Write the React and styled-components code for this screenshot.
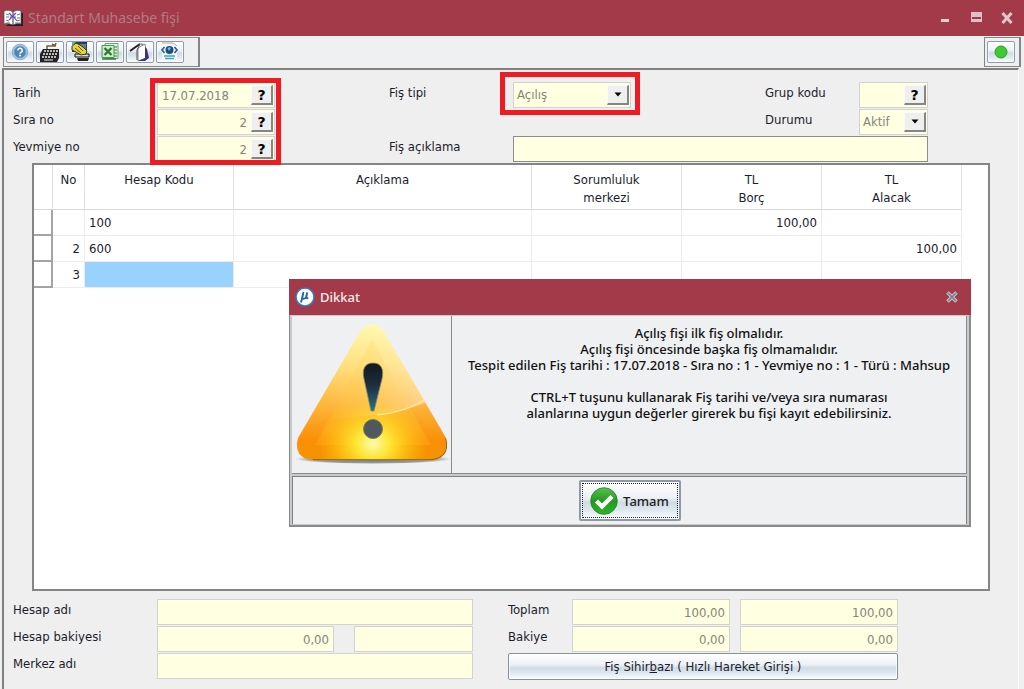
import React from "react";
import styled, { createGlobalStyle, css } from "styled-components";

const ui = `"Noto Sans", "Open Sans", sans-serif`;
const cond = `"DejaVu Sans Condensed", "Noto Sans", sans-serif`;
const wine = "#a33a49";
const cream = "#ffffe1";

const Global = createGlobalStyle`
  *, *::before, *::after { box-sizing: border-box; }
  body { margin: 0; background: #efefef; }
  button, input, select { font: inherit; color: inherit; margin: 0; }
`;

const Window = styled.div`
  position: relative;
  min-height: 100vh;
  display: flex;
  flex-direction: column;
  background: #efefef;
  color: #1c1c2c;
  font: 13px/18px ${cond};
`;

const TitleBar = styled.header`
  height: 36px;
  flex: none;
  display: flex;
  align-items: center;
  gap: 4px;
  padding: 0 8px 0 3px;
  background: ${wine};
`;

const Title = styled.h1`
  flex: 1;
  margin: 0;
  font: 14px/20px ${ui};
  color: #b07c82;
`;

const Controls = styled.div`
  display: flex;
  gap: 12px;
`;

const ControlButton = styled.button`
  width: 19px;
  height: 20px;
  padding: 0;
  border: 0;
  background: none;
  display: grid;
  place-items: center;
`;

const ToolBar = styled.nav`
  flex: none;
  display: flex;
  justify-content: space-between;
  padding: 1px 3px 0;
  background: #eff0f2;
`;

const ToolGroup = styled.div`
  display: flex;
  gap: 2px;
  padding: 3px ${(p) => (p.$wide ? 14 : 4)}px 3px 2px;
  border: 2px solid #858585;
  border-width: 1px 2px 1px 1px;
`;

const glossy = css`
  border: 1px solid #8f9cab;
  border-radius: 2px;
  background: linear-gradient(#ffffff, #edf1f5 42%, #cfdbe5 56%, #dde7ee 75%, #fafcfd);
  box-shadow: inset 0 0 0 1px #ffffffaa;
`;

const ToolButton = styled.button`
  ${glossy}
  width: 28px;
  height: 22px;
  padding: 0;
  display: grid;
  place-items: center;
`;

const Panel = styled.main`
  flex: 1;
  display: flex;
  flex-direction: column;
  margin: 1px 5px 0 2px;
  padding: 12px 0 10px;
  border-left: 2px solid #808080;
  border-top: 2px solid #808080;
  border-right: 1px solid #fafafa;
`;

const FormGrid = styled.form`
  display: grid;
  grid-template-columns: 144fr 232fr 124fr 252fr 94fr 69fr 90fr;
  grid-template-rows: repeat(3, 26px);
  row-gap: 1px;
  padding-left: 9px;
`;

const Label = styled.label`
  grid-column: ${(p) => p.$col};
  grid-row: ${(p) => p.$row};
  line-height: 22px;
`;

const Cell = styled.div`
  position: relative;
  grid-column: ${(p) => p.$col};
  grid-row: ${(p) => p.$row};
  display: grid;
  grid-auto-rows: 26px;
  row-gap: 1px;
  width: ${(p) => p.$w || "100%"};
`;

const RedFrame = styled.div`
  position: absolute;
  inset: ${(p) => p.$inset};
  border: 5px solid #ed1c24;
  pointer-events: none;
  z-index: 1;
`;

const Field = styled.div`
  display: flex;
  align-items: center;
  min-width: 0;
  height: 26px;
  padding-right: ${(p) => (p.$plain ? 0 : 1)}px;
  border: 1px solid ${(p) => (p.$strong ? "#8c8c8c" : "#d2d2d2")};
  background: ${cream};
  color: #85857a;
`;

const TextInput = styled.input`
  flex: 1;
  width: 0;
  min-width: 0;
  height: 24px;
  padding: 0 4px;
  border: 0;
  outline: 0;
  background: transparent;
  text-align: ${(p) => (p.$right ? "right" : "left")};
`;

const Select = styled.select`
  appearance: none;
  flex: 1;
  width: 0;
  min-width: 0;
  height: 24px;
  padding: 0 0 0 3px;
  border: 0;
  outline: 0;
  background: transparent;
`;

const raised = css`
  flex: none;
  width: 22px;
  height: 20px;
  padding: 0;
  display: grid;
  place-items: center;
  background: #efefef;
  border: 1px solid #fafafa;
  border-right: 2px solid #858585;
  border-bottom: 2px solid #858585;
`;

const HelpButton = styled.button`
  ${raised}
  color: #000;
  font: bold 14px/16px "DejaVu Sans", sans-serif;
`;

const Arrow = styled.span`
  ${raised}
  pointer-events: none;
`;

const GridBox = styled.section`
  flex: 1 0 240px;
  margin: 1px 28px 0;
  border: 2px solid #858585;
  background: #fff;
  padding-right: 26px;
`;

const Table = styled.table`
  width: 100%;
  table-layout: fixed;
  border-collapse: separate;
  border-spacing: 0;
`;

const Col = styled.col`
  width: ${(p) => p.$w};
`;

const Th = styled.th`
  height: 45px;
  padding: 6px 0 0;
  vertical-align: top;
  font-weight: normal;
  border-right: 1px solid #e2e2e2;
  border-bottom: 1px solid #d8d8d8;
`;

const Td = styled.td`
  height: 26px;
  padding: 0 4px;
  text-align: ${(p) => (p.$right ? "right" : "left")};
  background: ${(p) => (p.$active ? "#99d1ff" : "#fff")};
  border-right: 1px solid #ececec;
  border-bottom: 1px solid #ececec;
`;

const Selector = styled.td`
  height: 26px;
  padding: 0;
  border-right: 2px solid #a4a4a4;
  border-bottom: 2px solid #a4a4a4;
`;

const Footer = styled.section`
  display: grid;
  grid-template-columns: 144fr 177fr 20fr 119fr 35fr 64fr 158fr 10fr 158fr 120fr;
  grid-auto-rows: 26px;
  row-gap: 1px;
  padding: 8px 0 0 9px;
`;

const FooterCell = styled.div`
  grid-column: ${(p) => p.$col};
  grid-row: ${(p) => p.$row};
`;

const WizardButton = styled.button`
  ${glossy}
  width: 100%;
  height: 27px;
  padding: 0;
  border-color: #86919c;
`;

const Dialog = styled.div`
  position: absolute;
  left: 289px;
  top: 279px;
  width: 682px;
  display: flex;
  flex-direction: column;
  background: #c9cacc;
  border: 1px solid #8a8a8a;
  border-width: 0 2px 2px 1px;
  z-index: 2;
  font: 500 13px/16px ${ui};
  color: #111;
`;

const DialogTitle = styled.header`
  height: 36px;
  margin: 0 -2px 0 -1px;
  padding: 0 10px 0 6px;
  display: flex;
  align-items: center;
  gap: 5px;
  background: ${wine};
`;

const DialogHeading = styled.h2`
  flex: 1;
  margin: 0;
  font: 500 13px/18px ${ui};
  color: #f6eaec;
`;

const DialogBody = styled.div`
  display: grid;
  grid-template-columns: 160px 1fr;
  min-height: 158px;
  margin: 1px 2px 2px;
  background: #eff0f2;
  border-bottom: 1px solid #8a8a8a;
`;

const Picture = styled.div`
  border-right: 1px solid #8a8a8a;

  svg {
    display: block;
  }
`;

const Message = styled.div`
  padding: 9px 4px 0;
  text-align: center;
  border-right: 1px solid #8a8a8a;
`;

const Line = styled.p`
  margin: 0 0 ${(p) => (p.$gap ? 16 : 0)}px;
  white-space: nowrap;
`;

const DialogFooter = styled.footer`
  display: flex;
  justify-content: center;
  margin: 0 2px 1px;
  padding: 3px 0;
  background: #eff0f2;
  border: 1px solid #808080;
  border-width: 1px 1px 0 1px;
`;

const OkButton = styled.button`
  ${glossy}
  border: 2px solid #8d99ab;
  width: 102px;
  height: 41px;
  padding: 1px;
`;

const OkInner = styled.span`
  display: flex;
  align-items: center;
  justify-content: center;
  gap: 5px;
  height: 100%;
  border: 1px dotted #222;
  font: 500 13px/18px ${ui};
  color: #222;
`;

const BookIcon = () => (
  <svg width="21" height="19" viewBox="0 0 21 19">
    <path d="M3 17h17V4h-2" fill="#222" />
    <path d="M1 2c3-1 6-1 9 1 3-2 6-2 8-1v13c-3-1-6 0-8 1-3-1-6-2-9-1z" fill="#fff" stroke="#4a4a55" strokeWidth=".7" />
    <path d="M10 3v13" stroke="#333" />
    <path d="M3 5l3 1M3 8h3M3 11l3 1M3 14h4M14 6l3-1M14 9h3M14 12l3-1M12 14h5" stroke="#777" />
    <path d="M6 4l3 3M13 4l-3 3-4 4M10 7l4 5M7 8h6" stroke="#6a4cc0" strokeWidth="1.2" fill="none" />
  </svg>
);

const HelpIcon = () => (
  <svg width="18" height="18" viewBox="0 0 18 18">
    <circle cx="9" cy="9" r="7.8" fill="#a9c6de" stroke="#8fb0cc" />
    <circle cx="9" cy="9" r="5.8" fill="#4b86bd" stroke="#6c9cc8" />
    <path d="M6.8 7.4a2.2 2.200 0 1 1 3.2 2c-.8.4-1 .7-1 1.4" fill="none" stroke="#fff" strokeWidth="1.5" />
    <circle cx="9" cy="12.600" r="1" fill="#fff" />
  </svg>
);

const KeyboardIcon = () => (
  <svg width="22" height="20" viewBox="0 0 22 20">
    <path d="M8 7V4h8l1-3M13 2l4 2" fill="none" stroke="#6a6530" strokeWidth="1.5" />
    <path d="M4 7h16v9l-2 4H1v-8z" fill="#222" />
    <path d="M5 9h14M4 12h15M3 15h15" stroke="#eee" strokeWidth="1.500" strokeDasharray="2 1" />
    <path d="M5 18h9" stroke="#eee" />
  </svg>
);

const HandIcon = () => (
  <svg width="22" height="20" viewBox="0 0 22 20">
    <path d="M3 0h15v10H3z" fill="#2d3b55" />
    <path d="M11 2h6v5h-6z" fill="#5c7fa8" />
    <path d="M6 12h14v3H6z" fill="#ddd" stroke="#111" />
    <path d="M8 16h12l-1 3H9z" fill="#222" />
    <path d="M3 4l4-3 4 2 3 2 4 4-1 3-5 1-5-3-4-2z" fill="#e6d43a" stroke="#3c3810" />
    <path d="M6 6l6 5M9 4l5 5" stroke="#5b5418" />
    <path d="M3 0h4L3 4z" fill="#49b4cf" />
  </svg>
);

const ExcelIcon = () => (
  <svg width="20" height="20" viewBox="0 0 20 20">
    <path d="M5 1.500h13v15H5z" fill="#e4f0e2" stroke="#6aa870" />
    <path d="M14 5h3M14 8h3M14 11h3M14 14h3" stroke="#63a667" strokeWidth="1.400" />
    <path d="M2 3.500h12v12H2z" fill="#d5ead1" stroke="#4a9452" />
    <path d="M2 17h14" stroke="#2f7d38" strokeWidth="1.500" />
    <path d="M4.500 6l7 7M11.500 6l-7 7" stroke="#2a7a34" strokeWidth="2.400" />
  </svg>
);

const PageIcon = () => (
  <svg width="22" height="20" viewBox="0 0 22 20">
    <path d="M9 6l7-4 2 14-9 3z" fill="#fff" stroke="#8a88a0" />
    <path d="M16 5l2 2 2 9-4 3H9l7-3z" fill="#3a3480" />
    <path d="M1 9l7-5 3-2" fill="none" stroke="#222" strokeWidth="2" />
    <path d="M11 2L8 8v10" fill="none" stroke="#555" />
    <path d="M11 1l4 1-2 2z" fill="#8a8a8a" />
  </svg>
);

const WebIcon = () => (
  <svg width="20" height="20" viewBox="0 0 20 20">
    <path d="M2 0h12l3 3v16H2z" fill="#f7f8fa" />
    <path d="M2 1h11l4 3" fill="none" stroke="#b9a99a" />
    <path d="M4.500 5L2 8l2.500 3M14.500 5L17 8l-2.500 3" fill="none" stroke="#245a96" strokeWidth="1.600" />
    <circle cx="9.500" cy="8" r="4" fill="#1f4a82" />
    <path d="M7.500 6.500c1-1.500 2.500-1.500 3.500-.5L9 9z" fill="#61c3e0" />
    <path d="M4 14h11M5 16.500h9" stroke="#37a5c4" strokeWidth="1.500" />
  </svg>
);

const DownArrow = () => (
  <svg width="8" height="5" viewBox="0 0 8 5">
    <path d="M0.500 0.500h7L4 4.500z" fill="#000" />
  </svg>
);

const MikroIcon = () => (
  <svg width="20" height="20" viewBox="0 0 20 20">
    <circle cx="10" cy="10" r="9" fill="#fff" stroke="#3a78b8" strokeWidth="1.500" />
    <path d="M8.500 5L6 15.500M8.200 6.500l-.9 4c-.3 1.600 2.700 2 3.700-.5l1.300-4.500M12.300 5.500l-1 4.500c-.2 1.300.8 1.500 2 .8" fill="none" stroke="#2069ae" strokeWidth="1.900" />
  </svg>
);

const WarningIcon = () => (
  <svg width="159" height="156" viewBox="-1 0 159 156">
    <defs>
      <linearGradient id="body" x1="0" y1="0" x2="0" y2="1">
        <stop offset="0" stopColor="#fff8a8" />
        <stop offset=".3" stopColor="#ffdf77" />
        <stop offset=".6" stopColor="#fdb53a" />
        <stop offset=".85" stopColor="#fb8f08" />
        <stop offset="1" stopColor="#f29400" />
      </linearGradient>
      <radialGradient id="glow" cx=".5" cy=".5" r=".5">
        <stop offset="0" stopColor="#fffbb0" />
        <stop offset=".3" stopColor="#ffef3c" stopOpacity=".9" />
        <stop offset="1" stopColor="#ffd000" stopOpacity="0" />
      </radialGradient>
      <linearGradient id="sheen" x1="0" y1="0" x2="1" y2="0">
        <stop offset=".2" stopColor="#fff" stopOpacity="0" />
        <stop offset=".5" stopColor="#fff" stopOpacity=".12" />
        <stop offset="1" stopColor="#fff" stopOpacity=".5" />
      </linearGradient>
      <linearGradient id="mark" x1="0" y1="0" x2="0" y2="1">
        <stop offset="0" stopColor="#12181f" />
        <stop offset=".45" stopColor="#1d2d3a" />
        <stop offset="1" stopColor="#28708c" />
      </linearGradient>
      <radialGradient id="shade">
        <stop offset="0" stopColor="#333" stopOpacity=".7" />
        <stop offset=".8" stopColor="#444" stopOpacity=".5" />
        <stop offset="1" stopColor="#666" stopOpacity="0" />
      </radialGradient>
      <clipPath id="tri">
        <path d="M68 14Q79 2 90 14L153 122Q158 142 138 144H20Q0 142 5 122Z" />
      </clipPath>
    </defs>
    <ellipse cx="80" cy="143" rx="78" ry="5" fill="url(#shade)" />
    <path d="M68 14Q79 2 90 14L153 122Q158 142 138 144H20Q0 142 5 122Z" fill="url(#body)" />
    <g clipPath="url(#tri)">
      <path d="M79 24L138 129H22Z" fill="#ffc832" opacity=".22" />
      <ellipse cx="80" cy="128" rx="55" ry="46" fill="url(#glow)" />
      <path d="M0 0h159v72Q125 98 60 101Q30 104 0 104Z" fill="url(#sheen)" />
      <path d="M136 81Q112 97 84 99" fill="none" stroke="#fff0c0" strokeWidth="1" />
      <path d="M20 144H138Q158 142 153 122" fill="none" stroke="#8e5b10" strokeWidth="1.500" />
    </g>
    <path d="M80 47C89 47 91 54 89 63L81 95H78L71 63C69 54 71 47 80 47Z" fill="url(#mark)" stroke="#8d8a68" strokeWidth=".8" />
    <circle cx="80" cy="113" r="9.500" fill="#4f5860" stroke="#767a62" />
  </svg>
);

const CheckIcon = () => (
  <svg width="28" height="28" viewBox="0 0 28 28">
    <defs>
      <linearGradient id="green" x1="0" y1="0" x2="0" y2="1">
        <stop offset="0" stopColor="#5cc04d" />
        <stop offset=".5" stopColor="#219a22" />
        <stop offset="1" stopColor="#2fb32b" />
      </linearGradient>
    </defs>
    <circle cx="14" cy="14" r="13.300" fill="url(#green)" stroke="#208422" strokeWidth=".8" />
    <path d="M6.500 14l5.500 5.500L22 9.500" fill="none" stroke="#fff" strokeWidth="4.400" />
  </svg>
);

const tools = [
  ["Yardım", HelpIcon],
  ["Klavye", KeyboardIcon],
  ["Seçim", HandIcon],
  ["Excel", ExcelIcon],
  ["Belge", PageIcon],
  ["Web", WebIcon],
];

const Help = ({ name }) => (
  <HelpButton type="button" aria-label={name}>?</HelpButton>
);

const Drop = ({ id, value }) => (
  <Field>
    <Select id={id} defaultValue={value}>
      <option>{value}</option>
    </Select>
    <Arrow><DownArrow /></Arrow>
  </Field>
);

const Amount = ({ label, value, id }) => (
  <Field $plain>
    <TextInput id={id} aria-label={label} $right defaultValue={value} />
  </Field>
);

const rows = [
  ["", "100", "", "", "100,00", ""],
  ["2", "600", "", "", "", "100,00"],
  ["3", "", "", "", "", ""],
];

export default function App() {
  return (
    <Window>
      <Global />
      <TitleBar>
        <BookIcon />
        <Title>Standart Muhasebe fişi</Title>
        <Controls>
          <ControlButton aria-label="Küçült">
            <svg width="10" height="12"><path d="M1 7h8v3H1z" fill="#ead0d3" /></svg>
          </ControlButton>
          <ControlButton aria-label="Büyüt">
            <svg width="12" height="12"><path d="M1 0h11v10H1z" fill="#e0c0c4" /><path d="M2 5h9v2H2z" fill={wine} /></svg>
          </ControlButton>
          <ControlButton aria-label="Kapat">
            <svg width="12" height="12"><path d="M1.500 1l9 10M10.500 1l-9 10" stroke="#e0c8cb" strokeWidth="3" /></svg>
          </ControlButton>
        </Controls>
      </TitleBar>
      <ToolBar>
        <ToolGroup $wide>
          {tools.map(([name, Icon]) => (
            <ToolButton key={name} aria-label={name}><Icon /></ToolButton>
          ))}
        </ToolGroup>
        <ToolGroup>
          <ToolButton aria-label="Durum">
            <svg width="14" height="14"><circle cx="7" cy="7" r="6" fill="#3ecb2d" stroke="#2c9a2b" /></svg>
          </ToolButton>
        </ToolGroup>
      </ToolBar>
      <Panel>
        <FormGrid onSubmit={(e) => e.preventDefault()}>
          <Label $col={1} $row={1} htmlFor="tarih">Tarih</Label>
          <Label $col={1} $row={2} htmlFor="sira">Sıra no</Label>
          <Label $col={1} $row={3} htmlFor="yevmiye">Yevmiye no</Label>
          <Cell $col={2} $row="1 / 4" $w="118px">
            <Field><TextInput id="tarih" defaultValue="17.07.2018" /><Help name="Tarih seç" /></Field>
            <Field><TextInput id="sira" $right defaultValue="2" /><Help name="Sıra seç" /></Field>
            <Field><TextInput id="yevmiye" $right defaultValue="2" /><Help name="Yevmiye seç" /></Field>
            <RedFrame $inset="-4px -6px -3px -7px" />
          </Cell>
          <Label $col={3} $row={1} htmlFor="tip">Fiş tipi</Label>
          <Label $col={3} $row={3} htmlFor="aciklama">Fiş açıklama</Label>
          <Cell $col={4} $row={1} $w="118px">
            <Drop id="tip" value="Açılış" />
            <RedFrame $inset="-10px -9px -7px -13px" />
          </Cell>
          <Label $col={5} $row={1} htmlFor="grup">Grup kodu</Label>
          <Label $col={5} $row={2} htmlFor="durum">Durumu</Label>
          <Cell $col={6} $row={1}>
            <Field><TextInput id="grup" /><Help name="Grup seç" /></Field>
          </Cell>
          <Cell $col={6} $row={2}><Drop id="durum" value="Aktif" /></Cell>
          <Cell $col="4 / 7" $row={3}>
            <Field $strong><TextInput id="aciklama" /></Field>
          </Cell>
        </FormGrid>
        <GridBox>
          <Table>
            <colgroup>
              <Col $w="19px" /><Col $w="32px" /><Col $w="149px" /><Col />
              <Col $w="150px" /><Col $w="140px" /><Col $w="140px" />
            </colgroup>
            <thead>
              <tr>
                <Th />
                <Th>No</Th>
                <Th>Hesap Kodu</Th>
                <Th>Açıklama</Th>
                <Th>Sorumluluk<br />merkezi</Th>
                <Th>TL<br />Borç</Th>
                <Th>TL<br />Alacak</Th>
              </tr>
            </thead>
            <tbody>
              {rows.map((row, i) => (
                <tr key={i}>
                  <Selector />
                  {row.map((cell, j) => (
                    <Td key={j} $right={j === 0 || j > 3} $active={i === 2 && j === 1}>{cell}</Td>
                  ))}
                </tr>
              ))}
            </tbody>
          </Table>
        </GridBox>
        <Footer>
          <Label $col={1} $row={1} htmlFor="hesapadi">Hesap adı</Label>
          <Label $col={1} $row={2} htmlFor="bakiyesi">Hesap bakiyesi</Label>
          <Label $col={1} $row={3} htmlFor="merkez">Merkez adı</Label>
          <FooterCell $col="2 / 5" $row={1}><Amount id="hesapadi" /></FooterCell>
          <FooterCell $col={2} $row={2}><Amount id="bakiyesi" value="0,00" /></FooterCell>
          <FooterCell $col={4} $row={2}><Amount label="Bakiye türü" /></FooterCell>
          <FooterCell $col="2 / 5" $row={3}><Amount id="merkez" /></FooterCell>
          <Label $col={6} $row={1} htmlFor="toplam">Toplam</Label>
          <Label $col={6} $row={2} htmlFor="bakiye">Bakiye</Label>
          <FooterCell $col={7} $row={1}><Amount id="toplam" value="100,00" /></FooterCell>
          <FooterCell $col={9} $row={1}><Amount label="Toplam alacak" value="100,00" /></FooterCell>
          <FooterCell $col={7} $row={2}><Amount id="bakiye" value="0,00" /></FooterCell>
          <FooterCell $col={9} $row={2}><Amount label="Bakiye alacak" value="0,00" /></FooterCell>
          <FooterCell $col="6 / 10" $row={3}>
            <WizardButton type="button">Fiş Sihir<u>b</u>azı ( Hızlı Hareket Girişi )</WizardButton>
          </FooterCell>
        </Footer>
      </Panel>
      <Dialog role="dialog" aria-labelledby="dikkat">
        <DialogTitle>
          <MikroIcon />
          <DialogHeading id="dikkat">Dikkat</DialogHeading>
          <ControlButton aria-label="Kapat">
            <svg width="12" height="12"><path d="M1.500 1.500l9 9M10.500 1.500l-9 9" stroke="#c9c3cc" strokeWidth="3.600" /><path d="M2 2l8 8M10 2l-8 8" stroke="#77808f" strokeWidth="1.600" /></svg>
          </ControlButton>
        </DialogTitle>
        <DialogBody>
          <Picture><WarningIcon /></Picture>
          <Message>
            <Line>Açılış fişi ilk fiş olmalıdır.</Line>
            <Line>Açılış fişi öncesinde başka fiş olmamalıdır.</Line>
            <Line $gap>Tespit edilen Fiş tarihi : 17.07.2018 - Sıra no : 1 - Yevmiye no : 1 - Türü : Mahsup</Line>
            <Line>CTRL+T tuşunu kullanarak Fiş tarihi ve/veya sıra numarası</Line>
            <Line>alanlarına uygun değerler girerek bu fişi kayıt edebilirsiniz.</Line>
          </Message>
        </DialogBody>
        <DialogFooter>
          <OkButton type="button"><OkInner><CheckIcon />Tamam</OkInner></OkButton>
        </DialogFooter>
      </Dialog>
    </Window>
  );
}
